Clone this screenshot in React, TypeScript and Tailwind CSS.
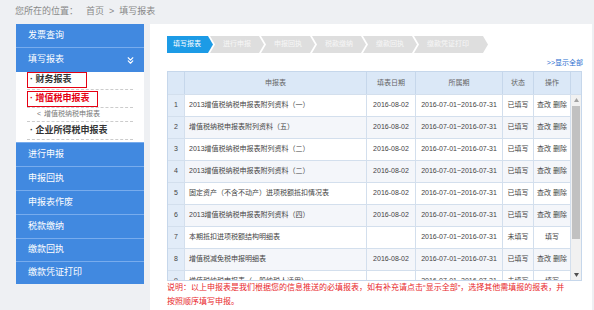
import { ChevronsDown } from 'lucide-react'

type Row = {
  name: string
  date: string
  filled: boolean
}

const rows: Row[] = [
  { name: '2013增值税纳税申报表附列资料（一）', date: '2016-08-02', filled: true },
  { name: '增值税纳税申报表附列资料（五）', date: '2016-08-02', filled: true },
  { name: '2013增值税纳税申报表附列资料（二）', date: '2016-08-02', filled: true },
  { name: '2013增值税纳税申报表附列资料（二）', date: '2016-08-02', filled: true },
  { name: '固定资产（不含不动产）进项税额抵扣情况表', date: '2016-08-02', filled: true },
  { name: '2013增值税纳税申报表附列资料（四）', date: '2016-08-02', filled: true },
  { name: '本期抵扣进项税额结构明细表', date: '', filled: false },
  { name: '增值税减免税申报明细表', date: '2016-08-02', filled: true },
  { name: '增值税纳税申报表（一般纳税人适用）', date: '', filled: false },
]

const steps = ['进行申报', '申报回执', '税款缴纳', '缴款回执', '缴款凭证打印']

function NavItem({ label, h = 'h-[24px]' }: { label: string; h?: string }) {
  return (
    <div className={`${h} flex items-center pl-[12px] bg-[#4189e0] border-t border-[#78aced] text-white text-[9px]`}>
      {label}
    </div>
  )
}

export default function App() {
  return (
    <div className="w-[594px] h-[310px] overflow-hidden bg-[#eef0f3] font-['Liberation_Sans','Noto_Sans_CJK_SC',sans-serif]">
      {/* Breadcrumb */}
      <div className="h-[24px] flex items-center pl-[15px] text-[9px] text-[#888]">
        <span>您所在的位置：</span>
        <span className="ml-[8px]">首页</span>
        <span className="mx-[5px]">&gt;</span>
        <span>填写报表</span>
      </div>

      <div className="flex">
        {/* Sidebar */}
        <div className="w-[150px] pl-[16px] pr-[6px]">
          <div className="bg-[#4189e0]">
            <div className="h-[23px] flex items-center pl-[12px] text-white text-[9px]">发票查询</div>
            <div className="h-[25px] flex items-center justify-between pl-[12px] pr-[8px] border-t border-[#78aced] text-white text-[9px]">
              <span>填写报表</span>
              <ChevronsDown size={11} strokeWidth={2.5} />
            </div>
          </div>

          <div className="bg-white px-[11px] h-[70px] flex flex-col">
            <div className="h-[18px] flex items-start border-b border-dashed border-[#ccc]">
              <div className="flex items-center h-[16px] w-[60px] border-[1.5px] border-[#e60012] pl-[2px] text-[9px] font-bold text-[#333]">
                · 财务报表
              </div>
            </div>
            <div className="h-[18px] flex items-center border-b border-dashed border-[#ccc]">
              <div className="flex items-center h-[16px] w-[71px] border-[1.5px] border-[#e60012] pl-[2px] text-[9px] font-bold text-[#e60012]">
                · 增值税申报表
              </div>
            </div>
            <div className="h-[14px] border-b border-dashed border-[#ccc] flex items-center pl-[10px] text-[7px] text-[#777]">
              <span className="mr-[3px]">&lt;</span>增值税纳税申报表
            </div>
            <div className="h-[18px] border-b border-dashed border-[#ccc] flex items-center pl-[3px] text-[9px] font-bold text-[#333]">
              · 企业所得税申报表
            </div>
          </div>

          <NavItem label="进行申报" />
          <NavItem label="申报回执" />
          <NavItem label="申报表作废" />
          <NavItem label="税款缴纳" />
          <NavItem label="缴款回执" h="h-[23px]" />
          <NavItem label="缴款凭证打印" h="h-[23px]" />
        </div>

        {/* Main */}
        <div className="flex-1 h-[286px] bg-white mr-[2px] pl-[17px] pt-[12px]">
          {/* Steps */}
          <div className="flex h-[17px]">
            <div className="w-[46px] h-[17px] bg-[#1c9be6] text-white text-[7px] flex items-center pl-[6px] [clip-path:polygon(0_0,calc(100%-5px)_0,100%_50%,calc(100%-5px)_100%,0_100%)]">
              填写报表
            </div>
            {steps.map((s, i) => (
              <div
                key={s}
                className={`${i === steps.length - 1 ? 'w-[74px]' : 'w-[54px]'} -ml-[3px] h-[17px] bg-[#dedede] text-[#f7f7f7] text-[7px] flex items-center pl-[13px] [clip-path:polygon(0_0,calc(100%-5px)_0,100%_50%,calc(100%-5px)_100%,0_100%,5px_50%)]`}
              >
                {s}
              </div>
            ))}
          </div>

          <div className="w-[416px] flex justify-end mt-[3px] h-[15px] items-center text-[7px] text-[#2a6fd0]">
            &gt;&gt;显示全部
          </div>

          {/* Table */}
          <div className="w-[415px] border border-[#c6d7eb] text-[7px] text-[#444]">
            <div className="grid grid-cols-[17px_182px_49px_87px_31px_37px_11px] h-[22px] bg-[#dbe8f7] text-[#666]">
              <div className="border-r border-[#c6d7eb]" />
              <div className="border-r border-[#c6d7eb] flex items-center justify-center">申报表</div>
              <div className="border-r border-[#c6d7eb] flex items-center justify-center">填表日期</div>
              <div className="border-r border-[#c6d7eb] flex items-center justify-center">所属期</div>
              <div className="border-r border-[#c6d7eb] flex items-center justify-center">状态</div>
              <div className="border-r border-[#c6d7eb] flex items-center justify-center">操作</div>
              <div />
            </div>

            <div className="flex h-[186px] overflow-hidden">
              <div className="w-[403px]">
                {rows.map((r, i) => (
                  <div
                    key={i}
                    className={`grid grid-cols-[17px_182px_49px_87px_31px_37px] h-[22px] border-t border-[#d3dfed] ${i % 2 === 1 ? 'bg-[#f4f6fa]' : 'bg-white'}`}
                  >
                    <div className="bg-[#e2ecf8] border-r border-[#d3dfed] flex items-center justify-center">{i + 1}</div>
                    <div className="border-r border-[#d3dfed] flex items-center pl-[4px]">{r.name}</div>
                    <div className="border-r border-[#d3dfed] flex items-center justify-center">{r.date}</div>
                    <div className="border-r border-[#d3dfed] flex items-center justify-center">2016-07-01~2016-07-31</div>
                    <div className="border-r border-[#d3dfed] flex items-center justify-center">{r.filled ? '已填写' : '未填写'}</div>
                    <div className="border-r border-[#d3dfed] flex items-center justify-center">{r.filled ? '查改 删除' : '填写'}</div>
                  </div>
                ))}
              </div>

              {/* Scrollbar */}
              <div className="w-[11px] bg-[#f1f1f1] border-t border-[#d3dfed] flex flex-col items-center">
                <svg width="5" height="4" viewBox="0 0 5 4" className="mt-[3px]">
                  <polygon points="2.5,0 5,4 0,4" fill="#a3a3a3" />
                </svg>
                <div className="w-[8px] h-[133px] bg-[#c1c1c1] mt-[4px]" />
                <div className="flex-1" />
                <svg width="5" height="4" viewBox="0 0 5 4" className="mb-[3px]">
                  <polygon points="0,0 5,0 2.5,4" fill="#505050" />
                </svg>
              </div>
            </div>
          </div>

          {/* Note */}
          <div className="w-[420px] text-[8px] leading-[14px] text-[#e8262a] whitespace-nowrap">
            说明：以上申报表是我们根据您的信息推送的必填报表，如有补充请点击“显示全部”，选择其他需填报的报表，并
            <br />
            按照顺序填写申报。
          </div>
        </div>
      </div>
    </div>
  )
}
